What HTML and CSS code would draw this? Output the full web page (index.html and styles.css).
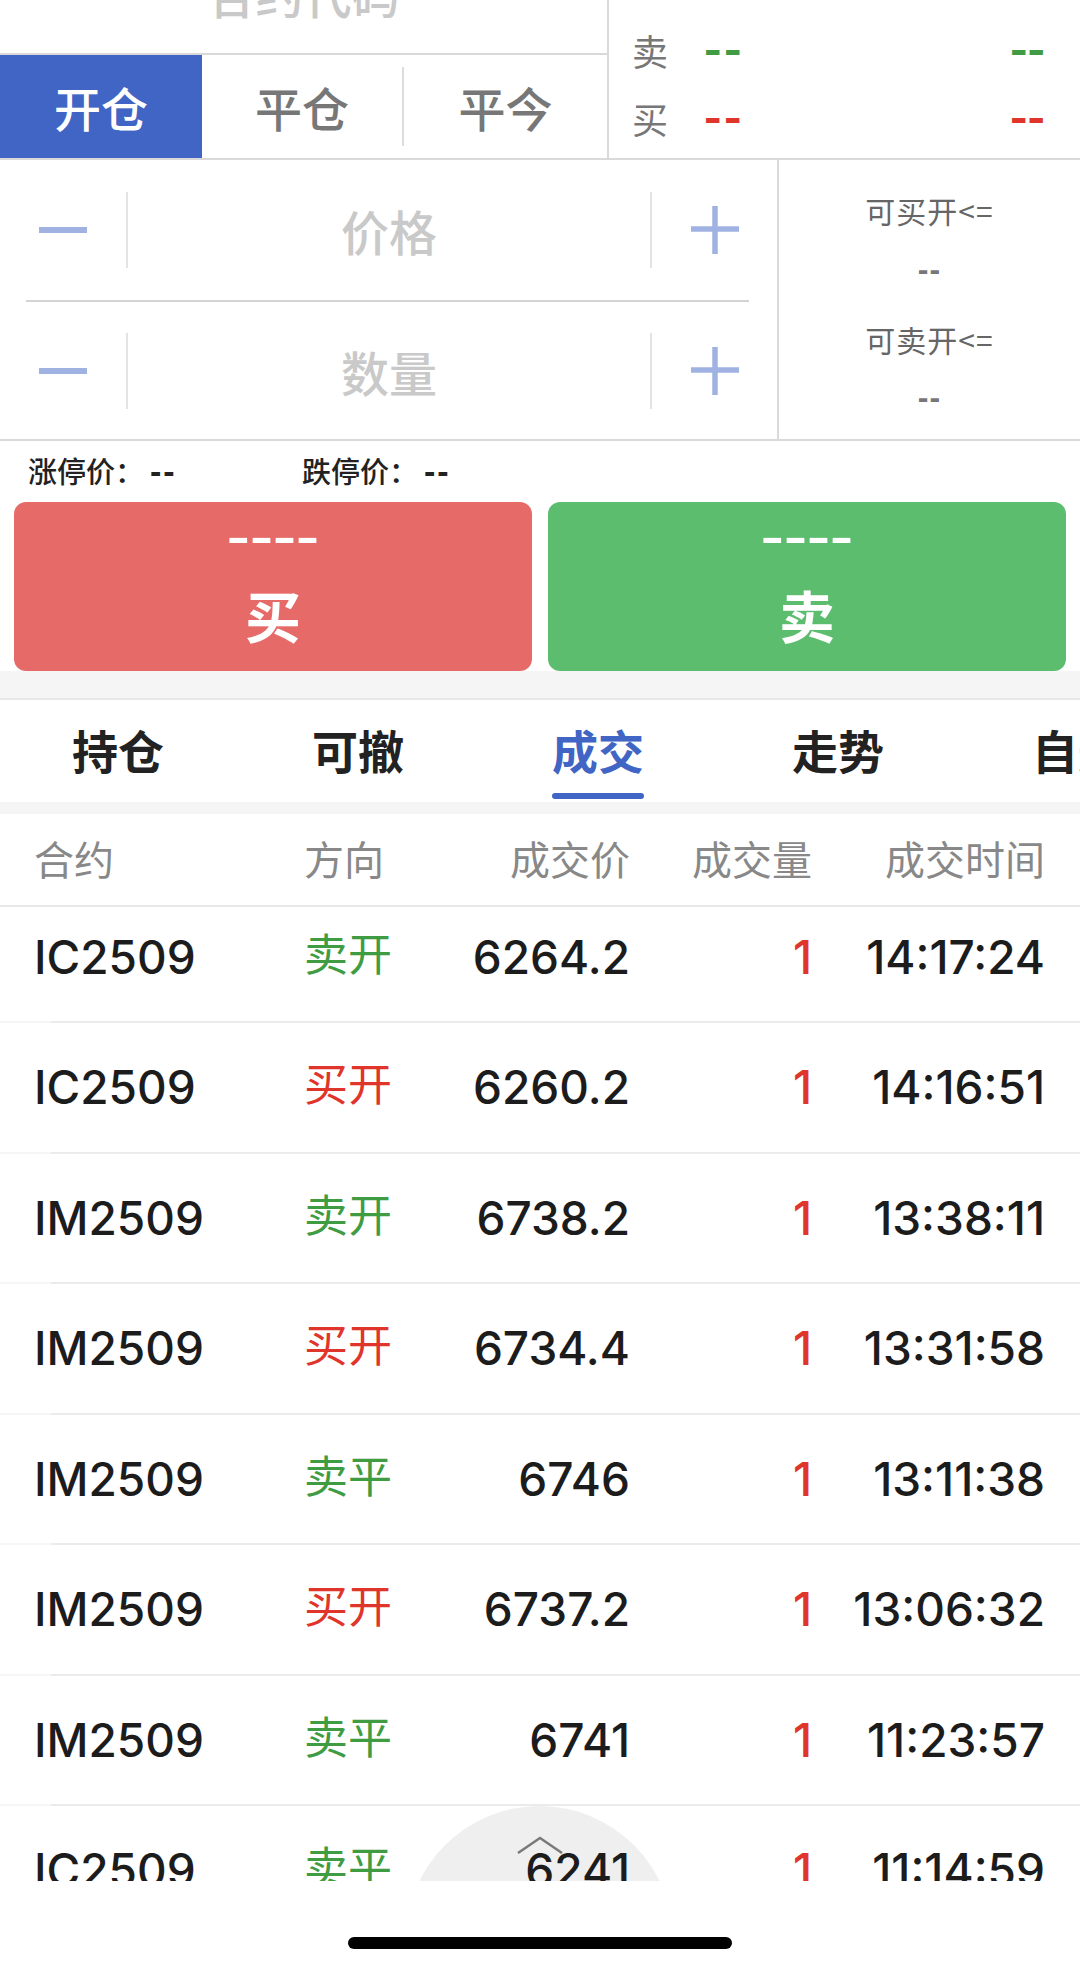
FILE: index.html
```html
<!DOCTYPE html>
<html lang="zh-CN">
<head>
<meta charset="utf-8">
<title>交易</title>
<link rel="stylesheet" href="styles.css">
</head>
<body>
<div class="page">
  <div class="top">
    <div class="top-left">
      <div class="code-row"><span class="code-text">合约代码</span></div>
      <div class="mode-tabs">
        <div class="mode active">开仓</div>
        <div class="mode">平仓</div>
        <div class="vsep"></div>
        <div class="mode grow">平今</div>
      </div>
    </div>
    <div class="quote">
      <div class="q-row"><span class="q-label">卖</span><span class="q-dash green dl">--</span><span class="q-dash green dr">--</span></div>
      <div class="q-row"><span class="q-label">买</span><span class="q-dash red dl">--</span><span class="q-dash red dr">--</span></div>
    </div>
  </div>

  <div class="order">
    <div class="inputs">
      <div class="step">
        <div class="step-btn"><svg width="48" height="48" viewBox="0 0 48 48"><path d="M0 24H48" stroke="#9fb2e2" stroke-width="6"/></svg></div>
        <div class="sep"></div>
        <div class="field">价格</div>
        <div class="sep"></div>
        <div class="step-btn plus"><svg width="48" height="48" viewBox="0 0 48 48"><path d="M0 23H48M24 0V48" stroke="#9fb2e2" stroke-width="5.5"/></svg></div>
      </div>
      <div class="hline"></div>
      <div class="step second">
        <div class="step-btn"><svg width="48" height="48" viewBox="0 0 48 48"><path d="M0 24H48" stroke="#9fb2e2" stroke-width="6"/></svg></div>
        <div class="sep"></div>
        <div class="field">数量</div>
        <div class="sep"></div>
        <div class="step-btn plus"><svg width="48" height="48" viewBox="0 0 48 48"><path d="M0 23H48M24 0V48" stroke="#9fb2e2" stroke-width="5.5"/></svg></div>
      </div>
    </div>
    <div class="avail">
      <div class="av-label">可买开&lt;=</div>
      <div class="av-dash d1">--</div>
      <div class="av-label l2">可卖开&lt;=</div>
      <div class="av-dash d2">--</div>
    </div>
  </div>

  <div class="limits">
    <div class="lim">涨停价：<b class="lim-dash">--</b></div>
    <div class="lim">跌停价：<b class="lim-dash">--</b></div>
  </div>

  <div class="trade">
    <div class="tb buy"><div class="tb-dash">----</div><div class="tb-text">买</div></div>
    <div class="tb sell"><div class="tb-dash">----</div><div class="tb-text">卖</div></div>
  </div>

  <div class="band"></div>

  <div class="tabs">
    <div class="tab">持仓</div>
    <div class="tab">可撤</div>
    <div class="tab active">成交<span class="tab-bar"></span></div>
    <div class="tab">走势</div>
    <div class="tab">自选</div>
  </div>

  <div class="band2"></div>

  <div class="thead grid">
    <div>合约</div>
    <div>方向</div>
    <div class="r">成交价</div>
    <div class="r">成交量</div>
    <div class="r">成交时间</div>
  </div>

  <div class="list">
    <div class="scroll-top"><svg width="46" height="18" viewBox="0 0 46 18"><path d="M1 17L23 2L45 17" fill="none" stroke="#7a7a7a" stroke-width="2.5"/></svg></div>
    <div class="row grid"><div>IC2509</div><div class="dir green">卖开</div><div class="r">6264.2</div><div class="r red">1</div><div class="r">14:17:24</div></div>
    <div class="row grid"><div>IC2509</div><div class="dir red">买开</div><div class="r">6260.2</div><div class="r red">1</div><div class="r">14:16:51</div></div>
    <div class="row grid"><div>IM2509</div><div class="dir green">卖开</div><div class="r">6738.2</div><div class="r red">1</div><div class="r">13:38:11</div></div>
    <div class="row grid"><div>IM2509</div><div class="dir red">买开</div><div class="r">6734.4</div><div class="r red">1</div><div class="r">13:31:58</div></div>
    <div class="row grid"><div>IM2509</div><div class="dir green">卖平</div><div class="r">6746</div><div class="r red">1</div><div class="r">13:11:38</div></div>
    <div class="row grid"><div>IM2509</div><div class="dir red">买开</div><div class="r">6737.2</div><div class="r red">1</div><div class="r">13:06:32</div></div>
    <div class="row grid"><div>IM2509</div><div class="dir green">卖平</div><div class="r">6741</div><div class="r red">1</div><div class="r">11:23:57</div></div>
    <div class="row grid"><div>IC2509</div><div class="dir green">卖平</div><div class="r">6241</div><div class="r red">1</div><div class="r">11:14:59</div></div>
  </div>

  <div class="footer"><div class="home"></div></div>
</div>
</body>
</html>
```

FILE: styles.css
```css
* { box-sizing: border-box; margin: 0; padding: 0; }
html, body { width: 1080px; height: 1969px; overflow: hidden; background: #fff; }
body { font-family: "Noto Sans CJK SC", "Noto Sans", sans-serif; color: #222; }
b { font-weight: bold; }

.page { display: flex; flex-direction: column; height: 1969px; }

/* top */
.top { display: flex; height: 160px; border-bottom: 2px solid #d9d9d9; flex: none; }
.top-left { width: 609px; border-right: 2px solid #d9d9d9; display: flex; flex-direction: column; }
.code-row { height: 55px; border-bottom: 2px solid #d9d9d9; overflow: hidden; display: flex; justify-content: center; flex: none; }
.code-text { font-size: 48px; line-height: 48px; height: 48px; color: #c9c9c9; margin-top: -31px; font-weight: 500; }
.mode-tabs { flex: 1; display: flex; align-items: center; }
.mode { width: 202px; height: 100%; display: flex; align-items: center; justify-content: center; font-size: 47px; font-weight: 500; color: #777; }
.mode:nth-child(2) { width: 200px; }
.mode.grow { flex: 1; }
.mode.active { background: #4065c4; color: #fff; }
.vsep { width: 2px; height: 79px; background: #dcdcdc; flex: none; }

.quote { flex: 1; padding: 16px 35px 0 23px; }
.q-row { height: 68px; display: flex; align-items: center; }
.q-label { font-size: 36px; color: #777; width: 72px; line-height: 40px; }
.q-dash { font-family: "Liberation Sans", Arial, sans-serif; font-weight: bold; font-size: 42px; line-height: 40px; letter-spacing: 2px; transform: scaleX(1.25); }
.q-dash.dl { transform-origin: left center; }
.q-dash.dr { margin-left: auto; transform-origin: right center; letter-spacing: 0; }
.green { color: #3f9c42; }
.red { color: #e0352b; }

/* order inputs */
.order { display: flex; height: 281px; border-bottom: 2px solid #d9d9d9; flex: none; }
.inputs { width: 779px; border-right: 2px solid #d9d9d9; display: flex; flex-direction: column; }
.step { height: 140px; display: flex; align-items: center; }
.step.second { height: 137px; }
.step-btn { width: 126px; display: flex; justify-content: center; align-items: center; }
.step-btn.plus { width: 125px; }
.sep { width: 2px; height: 76px; background: #e4e4e4; }
.field { flex: 1; text-align: center; font-size: 48px; line-height: 1; color: #c9c9c9; font-weight: 500; }
.hline { height: 2px; background: #d4d4d4; margin: 0 28px 0 26px; }

.avail { flex: 1; display: flex; flex-direction: column; align-items: center; padding-top: 30px; }
.av-label { font-size: 30px; line-height: 40px; color: #666; letter-spacing: 1px; }
.av-dash { font-family: "Liberation Sans", Arial, sans-serif; font-weight: bold; font-size: 32px; line-height: 40px; color: #777; letter-spacing: 1px; }
.av-dash.d1 { margin-top: 19px; }
.av-label.l2 { margin-top: 30px; }
.av-dash.d2 { margin-top: 18px; }

/* limits */
.limits { height: 61px; display: flex; align-items: center; padding: 0 0 4px 28px; font-size: 29px; color: #222; flex: none; }
.lim { width: 274px; font-weight: 500; }
.lim-dash { font-family: "Liberation Sans", Arial, sans-serif; font-size: 34px; margin-left: 6px; letter-spacing: 2px; }

/* trade buttons */
.trade { display: flex; gap: 16px; padding: 0 14px; height: 169px; flex: none; }
.tb { flex: 1; border-radius: 12px; display: flex; flex-direction: column; align-items: center; color: #fff; }
.tb.buy { background: #e66a67; }
.tb.sell { background: #5dbd6e; }
.tb-dash { margin-top: 16px; height: 40px; line-height: 40px; font-family: "Liberation Sans", Arial, sans-serif; font-weight: bold; font-size: 42px; transform: scaleX(1.65); }
.tb-text { margin-top: 26px; font-size: 56px; line-height: 60px; font-weight: bold; }

.band { height: 29px; background: #f5f5f5; border-bottom: 2px solid #e8e8e8; flex: none; }

/* tabs */
.tabs { display: flex; height: 102px; overflow: hidden; flex: none; }
.tab { flex: 0 0 240px; display: flex; flex-direction: column; align-items: center; padding-top: 26px; font-size: 46px; line-height: 46px; font-weight: bold; color: #222; white-space: nowrap; }
.tab:first-child { margin-left: -2px; }
.tab.active { color: #4065c4; }
.tab-bar { margin-top: auto; margin-bottom: 3px; width: 92px; height: 6px; border-radius: 3px; background: #4065c4; }

.band2 { height: 12px; background: #f5f5f5; flex: none; }

/* table */
.grid { display: grid; grid-template-columns: 270px 136px 190px 182px 1fr; padding: 0 35px 0 34px; align-items: center; }
.r { text-align: right; }
.thead { height: 93px; border-bottom: 2px solid #e8e8e8; font-size: 40px; color: #888; flex: none; padding-bottom: 4px; }

.list { height: 974px; flex: none; position: relative; z-index: 0; overflow: hidden; }
.row { height: 130.5px; border-bottom: 2px solid #ebebeb; border-image: linear-gradient(to right, #f6f6f6 52px, #ebebeb 52px) 1; font-family: Inter, "Liberation Sans", sans-serif; font-size: 46px; font-weight: 500; color: #1c1c1c; }
.row:nth-child(2) { height: 116px; padding-bottom: 14px; }
.row .dir { font-family: "Noto Sans CJK SC", sans-serif; font-size: 44px; font-weight: 400; margin-bottom: 10px; }
.row .dir.green { color: #3f9c42; }
.row .dir.red { color: #e0352b; }
.row .red { color: #e0352b; }

.scroll-top { position: absolute; left: 406px; top: 899px; width: 267px; height: 267px; border-radius: 50%; background: #efefef; z-index: -1; display: flex; justify-content: center; }
.scroll-top svg { margin-top: 30px; }

.footer { flex: 1; display: flex; justify-content: center; }
.home { margin-top: 56px; width: 384px; height: 12px; border-radius: 6px; background: #000; }
```
